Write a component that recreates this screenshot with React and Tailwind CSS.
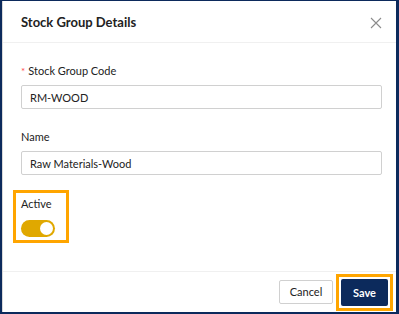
export default function App() {
  return (
    <div className="w-[399px] h-[314px] bg-[#0c2a5c] pt-px pl-[2px] pr-[3px] pb-[2px]" style={{ fontFamily: 'Lato, "Open Sans", sans-serif' }}>
      <div className="h-full bg-white flex flex-col border-l border-[#d9d9d9]">
        {/* Header */}
        <div className="h-[42px] flex items-center justify-between pl-[18px] pr-[12px] pt-[2px] border-b border-[#f0f0f0]">
          <h2 className="text-[13px] font-bold text-[#222]">Stock Group Details</h2>
          <button className="w-[16px] h-[16px] flex items-center justify-center text-[#8c8c8c]">
            <svg width="12" height="12" viewBox="0 0 12 12" fill="none" stroke="currentColor" strokeWidth="1.1">
              <path d="M1 1L11 11M11 1L1 11" />
            </svg>
          </button>
        </div>

        {/* Body */}
        <div className="flex-1 px-[18px] pt-[19px]">
          <label className="flex items-center text-[11px] text-[#222] h-[18px]">
            <span className="text-[#ff4d4f] text-[10px] mr-[3px]">*</span>Stock Group Code
          </label>
          <input
            defaultValue="RM-WOOD"
            className="mt-[5px] w-[361px] h-[24px] border border-[#d0d0d0] rounded-[2px] px-[8px] text-[11px] text-[#222] outline-none"
          />
          <label className="block mt-[19px] text-[11px] text-[#222] h-[18px] leading-[18px]">Name</label>
          <input
            defaultValue="Raw Materials-Wood"
            className="mt-[5px] w-[361px] h-[24px] border border-[#d0d0d0] rounded-[2px] px-[8px] text-[11px] text-[#222] outline-none"
          />
          <div className="mt-[15px] -ml-[8px] w-[56px] h-[53px] border-[3px] border-[#ffa500] pl-[5px] pt-[2px]">
            <div className="text-[11px] text-[#222] leading-[18px]">Active</div>
            <div className="mt-[7px] w-[34px] h-[17px] rounded-full bg-[#e0a800] flex items-center justify-end pr-[2px]">
              <div className="w-[13px] h-[13px] rounded-full bg-white" />
            </div>
          </div>
        </div>

        {/* Footer */}
        <div className="h-[41px] border-t border-[#f0f0f0] flex items-center justify-end gap-[3px] pr-[3px]">
          <button className="w-[54px] h-[24px] border border-[#d0d0d0] rounded-[2px] text-[11px] text-[#222] bg-white">Cancel</button>
          <div className="w-[57px] h-[37px] border-[3px] border-[#ffa500] p-[2px]">
            <button className="w-full h-full bg-[#0c2a5c] text-white text-[11px] font-bold rounded-[2px]">Save</button>
          </div>
        </div>
      </div>
    </div>
  );
}
